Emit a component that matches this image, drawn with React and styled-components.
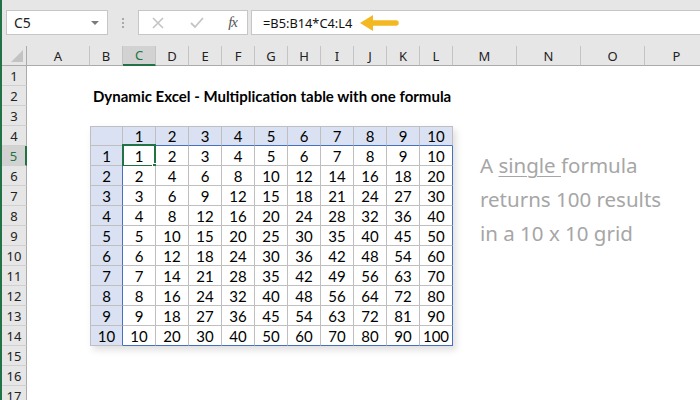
import React from "react";
import styled, { createGlobalStyle } from "styled-components";

const GlobalStyle = createGlobalStyle`
  html, body {
    margin: 0;
    padding: 0;
    background: #ffffff;
  }
  body {
    font-family: "Noto Sans", "Liberation Sans", sans-serif;
  }
`;

const green = "#217346";
const gridGray = "#bfbfbf";
const spillBlue = "#4570c0";

const COLUMNS = [
  ["A", 63], ["B", 33], ["C", 33], ["D", 33], ["E", 33], ["F", 33], ["G", 33], ["H", 33],
  ["I", 33], ["J", 33], ["K", 33], ["L", 33], ["M", 64], ["N", 64], ["O", 64], ["P", 64],
];

const Window = styled.div`
  width: 700px;
  height: 400px;
  overflow: hidden;
  border-left: 2px solid ${green};
  box-sizing: border-box;
  display: flex;
  flex-direction: column;
  background: #fff;
`;

const FormulaBar = styled.div`
  height: 46px;
  flex: none;
  box-sizing: border-box;
  background: #e6e6e6;
  display: flex;
  align-items: flex-start;
  padding: 10px 0 0 4px;
`;

const Box = styled.div`
  height: 25px;
  box-sizing: border-box;
  background: #fff;
  border: 1px solid #c6c6c6;
  display: flex;
  align-items: center;
`;

const NameBox = styled(Box)`
  width: 102px;
  padding: 0 8px 0 7px;
  justify-content: space-between;
  font-size: 14px;
  color: #222;
`;

const DropTriangle = styled.span`
  width: 0;
  height: 0;
  border-left: 4px solid transparent;
  border-right: 4px solid transparent;
  border-top: 4px solid #7b7b7b;
`;

const Dots = styled.div`
  width: 30px;
  height: 25px;
  display: flex;
  flex-direction: column;
  align-items: center;
  justify-content: center;
  gap: 2px;
  span {
    width: 2px;
    height: 2px;
    background: #a8a8a8;
  }
`;

const FxBox = styled(Box)`
  width: 110px;
  padding: 0 10px 0 12px;
  justify-content: space-between;
`;

const FxText = styled.span`
  font-family: "Liberation Serif", "DejaVu Serif", serif;
  font-style: italic;
  font-size: 15px;
  color: #555;
  letter-spacing: -1px;
`;

const FormulaInput = styled(Box)`
  flex: 1;
  margin-left: 3px;
  border-right: none;
  padding-left: 11px;
  font-size: 12.8px;
  color: #111;
  gap: 8px;
`;

const Sheet = styled.div`
  display: grid;
  grid-template-columns: 25px ${COLUMNS.map(([, w]) => `${w}px`).join(" ")};
  grid-template-rows: repeat(18, 20px);
  flex: none;
`;

const Corner = styled.div`
  grid-column: 1;
  grid-row: 1;
  background: #e6e6e6;
  border-bottom: 1px solid #ababab;
  border-right: 1px solid #ababab;
  box-sizing: border-box;
  position: relative;
  &::after {
    content: "";
    position: absolute;
    right: 3px;
    bottom: 3px;
    border-left: 12px solid transparent;
    border-bottom: 12px solid #c3c3c3;
  }
`;

const ColHeader = styled.div`
  grid-row: 1;
  box-sizing: border-box;
  display: flex;
  align-items: center;
  justify-content: center;
  font-size: 13px;
  color: ${({ $active }) => ($active ? green : "#222")};
  background: ${({ $active }) => ($active ? "#d2d2d2" : "#e6e6e6")};
  border-bottom: ${({ $active }) => ($active ? `2px solid ${green}` : "1px solid #ababab")};
  border-right: 1px solid #c4c4c4;
`;

const RowHeader = styled.div`
  grid-column: 1;
  box-sizing: border-box;
  display: flex;
  align-items: center;
  justify-content: center;
  font-size: 13px;
  color: ${({ $active }) => ($active ? green : "#222")};
  background: ${({ $active }) => ($active ? "#d2d2d2" : "#e6e6e6")};
  border-right: ${({ $active }) => ($active ? `2px solid ${green}` : "1px solid #ababab")};
  border-bottom: 1px solid #d0d0d0;
`;

const Title = styled.div`
  grid-column: 3 / span 11;
  grid-row: 3;
  display: flex;
  align-items: center;
  padding-left: 3px;
  font-family: Lato, "Liberation Sans", sans-serif;
  font-weight: 700;
  font-size: 15px;
  color: #000;
  white-space: nowrap;
`;

const Table = styled.div`
  grid-column: 3 / span 11;
  grid-row: 5 / span 11;
  display: grid;
  grid-template-columns: repeat(11, 1fr);
  grid-template-rows: repeat(11, 20px);
  box-shadow: 3px 4px 7px rgba(0, 0, 0, 0.13);
  font-family: Lato, "Liberation Sans", sans-serif;
  font-size: 15px;
  color: #000;
`;

const Cell = styled.div`
  position: relative;
  box-sizing: border-box;
  display: flex;
  align-items: center;
  justify-content: center;
  background: ${({ $head }) => ($head ? "#d9e1f2" : "#fff")};
  border-right: 1px solid ${({ $blueRight }) => ($blueRight ? spillBlue : gridGray)};
  border-bottom: 1px solid ${({ $blueBottom }) => ($blueBottom ? spillBlue : gridGray)};
  border-top: ${({ $top }) => ($top ? `1px solid ${gridGray}` : "none")};
  border-left: ${({ $left }) => ($left ? `1px solid ${gridGray}` : "none")};
`;

const Selection = styled.div`
  position: absolute;
  left: -1px;
  top: -2px;
  right: -1px;
  bottom: -2px;
  border: 2px solid ${green};
  pointer-events: none;
`;

const Handle = styled.div`
  position: absolute;
  right: -5px;
  bottom: -5px;
  width: 5px;
  height: 5px;
  background: ${green};
  border: 1px solid #fff;
`;

const Note = styled.div`
  grid-column: 14 / span 4;
  grid-row: 6 / span 7;
  padding: 2px 0 0 27px;
  font-family: "Noto Sans", "DejaVu Sans", sans-serif;
  font-size: 20.5px;
  line-height: 34px;
  color: #a6a6a6;
  white-space: nowrap;
  u {
    text-decoration-thickness: 1px;
    text-underline-offset: 3px;
  }
`;

function Arrow() {
  return (
    <svg width="40" height="20" viewBox="0 0 40 20">
      <path d="M0 10 L13 2 L13 18 Z" fill="#f4b823" />
      <line x1="11" y1="10" x2="36" y2="10" stroke="#f4b823" strokeWidth="5.5" strokeLinecap="round" />
    </svg>
  );
}

function Cross() {
  return (
    <svg width="14" height="14" viewBox="0 0 14 14">
      <path d="M2 2 L12 12 M12 2 L2 12" stroke="#c4c4c4" strokeWidth="1.6" />
    </svg>
  );
}

function Check() {
  return (
    <svg width="16" height="14" viewBox="0 0 16 14">
      <path d="M2 7 L6 11 L14 2" stroke="#c4c4c4" strokeWidth="1.8" fill="none" />
    </svg>
  );
}

function MultiplicationTable() {
  const cells = [];
  for (let r = 0; r <= 10; r++) {
    for (let c = 0; c <= 10; c++) {
      const head = r === 0 || c === 0;
      let value = "";
      if (r === 0 && c > 0) value = c;
      else if (c === 0 && r > 0) value = r;
      else if (r > 0 && c > 0) value = r * c;
      cells.push(
        <Cell
          key={`${r}-${c}`}
          $head={head}
          $top={r === 0}
          $left={c === 0}
          $blueRight={(c === 0 && r > 0) || (c === 10 && r > 0)}
          $blueBottom={(r === 0 && c > 0) || (r === 10 && c > 0)}
        >
          {value}
          {r === 1 && c === 1 && (
            <Selection>
              <Handle />
            </Selection>
          )}
        </Cell>
      );
    }
  }
  return <Table>{cells}</Table>;
}

export default function App() {
  return (
    <>
      <GlobalStyle />
      <Window>
        <FormulaBar>
          <NameBox>
            C5
            <DropTriangle />
          </NameBox>
          <Dots>
            <span />
            <span />
            <span />
          </Dots>
          <FxBox>
            <Cross />
            <Check />
            <FxText>fx</FxText>
          </FxBox>
          <FormulaInput>
            =B5:B14*C4:L4
            <Arrow />
          </FormulaInput>
        </FormulaBar>
        <Sheet>
          <Corner />
          {COLUMNS.map(([name], i) => (
            <ColHeader key={name} style={{ gridColumn: i + 2 }} $active={name === "C"}>
              {name}
            </ColHeader>
          ))}
          {Array.from({ length: 17 }, (_, i) => (
            <RowHeader key={i} style={{ gridRow: i + 2 }} $active={i + 1 === 5}>
              {i + 1}
            </RowHeader>
          ))}
          <Title>Dynamic Excel - Multiplication table with one formula</Title>
          <MultiplicationTable />
          <Note>
            A <u>single </u>formula
            <br />
            returns 100 results
            <br />
            in a 10 x 10 grid
          </Note>
        </Sheet>
      </Window>
    </>
  );
}
